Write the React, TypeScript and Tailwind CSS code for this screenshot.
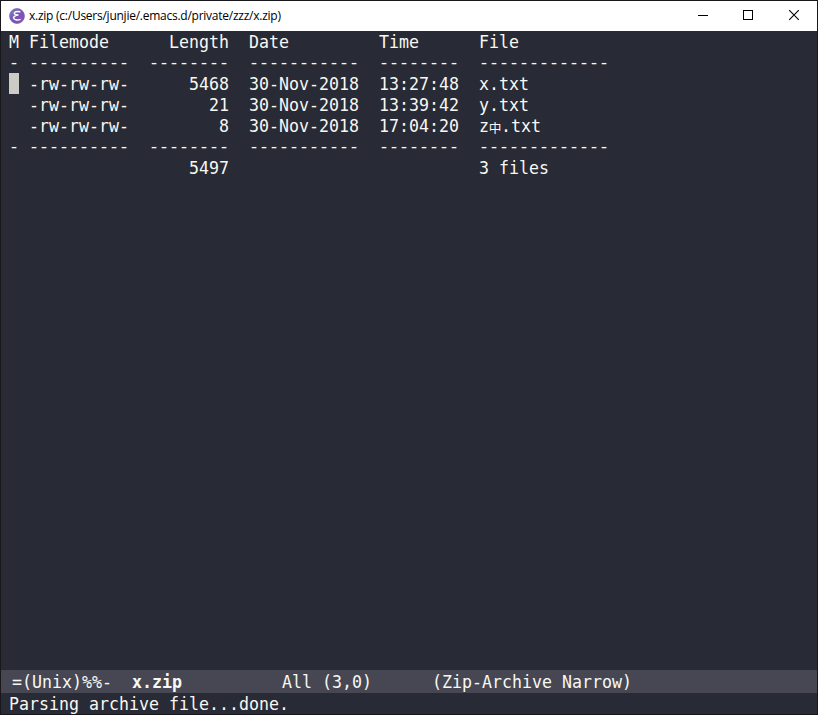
import React from "react";

const MONO =
  "block origin-left scale-x-[0.9229] whitespace-pre font-['DejaVu_Sans_Mono','Noto_Sans_CJK_SC',monospace] text-[18px] leading-[21px]";

type Entry = { mode: string; length: string; date: string; time: string; file: React.ReactNode };

const entries: Entry[] = [
  { mode: "-rw-rw-rw-", length: "5468", date: "30-Nov-2018", time: "13:27:48", file: "x.txt" },
  { mode: "-rw-rw-rw-", length: "21", date: "30-Nov-2018", time: "13:39:42", file: "y.txt" },
  {
    mode: "-rw-rw-rw-",
    length: "8",
    date: "30-Nov-2018",
    time: "17:04:20",
    file: (
      <>
        z
        <span className="inline-block w-[13px] translate-y-px scale-x-110 text-center text-[12.5px] leading-[12px]">
          中
        </span>
        .txt
      </>
    ),
  },
];

function Cell({ children }: { children?: React.ReactNode }) {
  return <span className={MONO}>{children}</span>;
}

function Rule({ length }: { length: number }) {
  return (
    <span className="block translate-y-px whitespace-pre font-['Liberation_Mono',monospace] text-[16.664px] leading-[21px]">
      {"-".repeat(length)}
    </span>
  );
}

function Row({ mark, cells }: { mark?: React.ReactNode; cells: React.ReactNode[] }) {
  return (
    <div className="grid h-[21px] grid-cols-[20px_120px_100px_130px_100px_1fr]">
      <div>{mark}</div>
      {cells.map((cell, i) => (
        <div key={i}>{cell}</div>
      ))}
    </div>
  );
}

function TextRow({ mark, cells }: { mark?: React.ReactNode; cells: React.ReactNode[] }) {
  return (
    <Row
      mark={mark}
      cells={cells.map((cell, i) => (
        <Cell key={i}>{i === 1 ? String(cell).padStart(8, " ") : cell}</Cell>
      ))}
    />
  );
}

function RuleRow() {
  return <Row mark={<Rule length={1} />} cells={[10, 8, 11, 8, 13].map((n, i) => <Rule key={i} length={n} />)} />;
}

function EmacsLogo() {
  return (
    <svg className="ml-2 size-4 shrink-0" viewBox="0 0 16 16">
      <defs>
        <linearGradient id="orb" x1="0" y1="0" x2="1" y2="1">
          <stop offset="0" stopColor="#8381c5" />
          <stop offset="0.5" stopColor="#7655b3" />
          <stop offset="1" stopColor="#9150bc" />
        </linearGradient>
      </defs>
      <circle cx="8" cy="8" r="7.5" fill="url(#orb)" stroke="#6c5aa3" strokeWidth="0.6" />
      <path
        d="M10.8 3.8C8.2 3.2 5.2 3.8 5.3 5.3C5.4 6.6 7.2 7 9 7C6.4 7.2 4.4 8.5 4.6 10C4.9 11.9 8.2 12.4 11 11.6"
        fill="none"
        stroke="#fff"
        strokeWidth="1.5"
        strokeLinecap="round"
        strokeLinejoin="round"
      />
    </svg>
  );
}

function TitleBar() {
  return (
    <header className="flex h-[30px] shrink-0 items-center bg-white">
      <EmacsLogo />
      <span className="ml-1 whitespace-pre font-['Open_Sans','Noto_Sans',sans-serif] text-[12px] leading-4 tracking-[-0.25px] text-black">
        x.zip (c:/Users/junjie/.emacs.d/private/zzz/x.zip)
      </span>
      <div className="ml-auto flex">
        <svg className="h-[30px] w-[46px]" viewBox="0 0 46 30" shapeRendering="crispEdges">
          <path d="M19 14.5H29" stroke="#000" />
        </svg>
        <svg className="h-[30px] w-[46px]" viewBox="0 0 46 30" shapeRendering="crispEdges">
          <path d="M18.5 9.5H27.5V18.5H18.5Z" fill="none" stroke="#000" />
        </svg>
        <svg className="h-[30px] w-[46px]" viewBox="0 0 46 30">
          <path d="M18.2 9.2L27.8 18.8M27.8 9.2L18.2 18.8" stroke="#000" strokeWidth="1.1" />
        </svg>
      </div>
    </header>
  );
}

export default function App() {
  return (
    <div className="flex h-[715px] w-[818px] flex-col overflow-hidden border border-[#18171c] bg-[#282a36] text-[#f8f8f2]">
      <TitleBar />
      <main className="min-h-0 flex-1 pl-2">
        <TextRow mark={<Cell>M</Cell>} cells={["Filemode", "Length", "Date", "Time", "File"]} />
        <RuleRow />
        {entries.map((e, i) => (
          <TextRow
            key={i}
            mark={i === 0 ? <div className="h-[21px] w-2.5 bg-[#ccccc7]" /> : null}
            cells={[e.mode, e.length, e.date, e.time, e.file]}
          />
        ))}
        <RuleRow />
        <TextRow cells={["", "5497", "", "", "3 files"]} />
      </main>
      <footer className="shrink-0">
        <div className="flex h-[23px] items-center bg-[#464752] pl-[11px]">
          <span className={MONO}>
            {"=(Unix)%%-  "}
            <b className="font-bold">x.zip</b>
            {"          All (3,0)      (Zip-Archive Narrow)"}
          </span>
        </div>
        <div className="h-[21px] pl-2">
          <Cell>Parsing archive file...done.</Cell>
        </div>
      </footer>
    </div>
  );
}
